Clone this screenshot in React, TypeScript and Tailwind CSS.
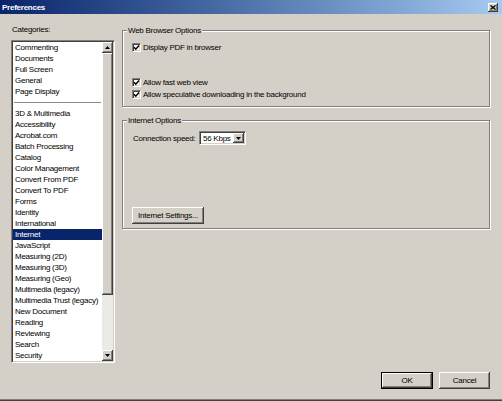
const categories: (string | null)[] = [
  "Commenting",
  "Documents",
  "Full Screen",
  "General",
  "Page Display",
  null,
  "3D & Multimedia",
  "Accessibility",
  "Acrobat.com",
  "Batch Processing",
  "Catalog",
  "Color Management",
  "Convert From PDF",
  "Convert To PDF",
  "Forms",
  "Identity",
  "International",
  "Internet",
  "JavaScript",
  "Measuring (2D)",
  "Measuring (3D)",
  "Measuring (Geo)",
  "Multimedia (legacy)",
  "Multimedia Trust (legacy)",
  "New Document",
  "Reading",
  "Reviewing",
  "Search",
  "Security",
  "Security (Enhanced)",
];

const raised =
  "bg-[#d4d0c8] shadow-[inset_-1px_-1px_0_#404040,inset_1px_1px_0_#ffffff,inset_-2px_-2px_0_#808080,inset_2px_2px_0_#d4d0c8]";
const sunken =
  "border border-t-[#808080] border-l-[#808080] border-r-white border-b-white shadow-[inset_1px_1px_0_#404040,inset_-1px_-1px_0_#d4d0c8]";

function Arrow({ dir }: { dir: "up" | "down" }) {
  return (
    <svg width="5" height="3" viewBox="0 0 5 3">
      <path d={dir === "up" ? "M2.5 0 L5 3 L0 3 Z" : "M0 0 L5 0 L2.5 3 Z"} fill="#000" />
    </svg>
  );
}

function CheckBox() {
  return (
    <span className={`w-[9px] h-[9px] bg-white flex items-center justify-center shrink-0 ${sunken}`}>
      <svg width="7" height="7" viewBox="0 0 7 7" className="shrink-0">
        <path d="M1 3.2 L2.8 5.2 L6 1.4" stroke="#000" strokeWidth="1.5" fill="none" />
      </svg>
    </span>
  );
}

function Group({
  title,
  className,
  children,
}: {
  title: string;
  className: string;
  children: React.ReactNode;
}) {
  return (
    <div
      className={`relative border border-[#808080] shadow-[1px_1px_0_#ffffff,inset_1px_1px_0_#ffffff] ${className}`}
    >
      <span className="absolute -top-[6px] left-[4px] px-[1px] bg-[#d4d0c8] leading-[11px]">
        {title}
      </span>
      {children}
    </div>
  );
}

function CheckRow({ label, className }: { label: string; className?: string }) {
  return (
    <div className={`flex items-center gap-[2px] h-[12px] ${className ?? ""}`}>
      <CheckBox />
      <span className="leading-[11px]">{label}</span>
    </div>
  );
}

export default function App() {
  return (
    <div className="w-[502px] h-[401px] bg-[#d4d0c8] flex flex-col overflow-hidden font-['Liberation_Sans',Arial,sans-serif] text-[8px] tracking-[-0.25px] text-black">
      {/* title bar */}
      <div className="h-[14px] shrink-0 flex items-center justify-between bg-gradient-to-r from-[#0a246a] to-[#a6caf0] pl-[2px] pr-[4px]">
        <span className="font-bold text-white leading-[11px]">Preferences</span>
        <span className={`w-[10px] h-[9px] flex items-center justify-center ${raised}`}>
          <svg width="6" height="5" viewBox="0 0 6 5">
            <path d="M0.5 0.5 L5.5 4.5 M5.5 0.5 L0.5 4.5" stroke="#000" strokeWidth="1.3" />
          </svg>
        </span>
      </div>

      <div className="h-[358px] shrink-0 flex items-start">
        {/* categories */}
        <div className="w-[115px] pl-[11px] shrink-0">
          <div className="mt-[10px] h-[11px] leading-[11px] pl-[1px]">Categories:</div>
          <div className={`mt-[5px] w-[104px] h-[323px] bg-white flex p-[1px] ${sunken}`}>
            <div className="flex-1 overflow-hidden">
              {categories.map((c, i) =>
                c === null ? (
                  <div key={i} className="h-[11px] flex items-center px-[1px]">
                    <div className="h-[1px] w-full bg-[#8a8a8a]" />
                  </div>
                ) : (
                  <div
                    key={i}
                    className={`h-[11px] leading-[11px] pl-[2px] whitespace-nowrap ${
                      c === "Internet" ? "bg-[#0a246a] text-white" : ""
                    }`}
                  >
                    {c}
                  </div>
                )
              )}
            </div>
            <div className="w-[11px] flex flex-col bg-[#eceae6]">
              <div className={`h-[11px] flex items-center justify-center ${raised}`}>
                <Arrow dir="up" />
              </div>
              <div className="flex-1 flex flex-col">
                <div className={`h-[242px] ${raised}`} />
              </div>
              <div className={`h-[11px] flex items-center justify-center ${raised}`}>
                <Arrow dir="down" />
              </div>
            </div>
          </div>
        </div>

        {/* options */}
        <div className="ml-[7px] w-[368px] shrink-0 pt-[16px]">
          <Group title="Web Browser Options" className="h-[77px] pl-[9px] pt-[10px]">
            <CheckRow label="Display PDF in browser" />
            <CheckRow label="Allow fast web view" className="mt-[23px]" />
            <CheckRow label="Allow speculative downloading in the background" />
          </Group>

          <Group title="Internet Options" className="mt-[13px] h-[109px] pl-[9px] pt-[10px]">
            <div className="flex items-center h-[14px]">
              <span className="w-[67px] leading-[11px] pl-[1px]">Connection speed:</span>
              <div className={`w-[47px] h-[14px] bg-white flex items-center p-[1px] ${sunken}`}>
                <span className="flex-1 pl-[2px] leading-[11px]">56 Kbps</span>
                <span className={`w-[11px] h-full flex items-center justify-center ${raised}`}>
                  <Arrow dir="down" />
                </span>
              </div>
            </div>
            <button
              type="button"
              className={`mt-[62px] w-[72px] h-[17px] flex items-center justify-center leading-[11px] ${raised}`}
            >
              Internet Settings...
            </button>
          </Group>
        </div>
      </div>

      {/* buttons */}
      <div className="h-[17px] shrink-0 flex justify-end gap-[6px] pr-[12px]">
        <button
          type="button"
          className="w-[52px] h-[17px] border border-black flex items-center justify-center bg-[#d4d0c8] shadow-[inset_-1px_-1px_0_#404040,inset_1px_1px_0_#ffffff,inset_-2px_-2px_0_#808080] leading-[11px]"
        >
          OK
        </button>
        <button
          type="button"
          className={`w-[51px] h-[17px] flex items-center justify-center leading-[11px] ${raised}`}
        >
          Cancel
        </button>
      </div>

      <div className="flex-1" />
      <div className="h-[1px] shrink-0 bg-[#808080]" />
      <div className="h-[1px] shrink-0 bg-[#404040]" />
    </div>
  );
}
